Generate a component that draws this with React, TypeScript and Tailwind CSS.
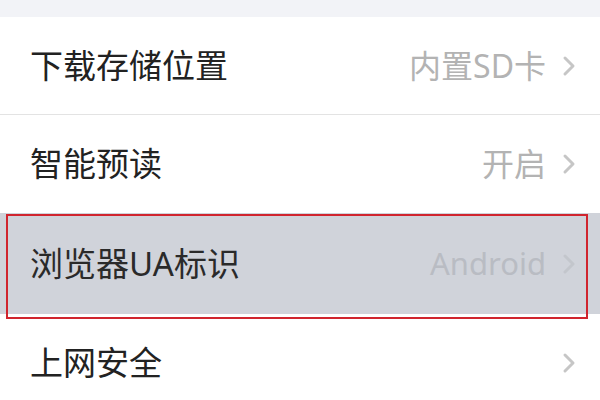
import React from 'react';

interface RowProps {
  label: string;
  value?: string;
  active?: boolean;
  divider?: boolean;
}

function Chevron({ color }: { color: string }) {
  return (
    <svg width="14" height="22" viewBox="0 0 14 22" fill="none" className="ml-[16px]">
      <polyline points="3,3 11,11 3,19" stroke={color} strokeWidth="3" strokeLinecap="round" strokeLinejoin="round" />
    </svg>
  );
}

function SettingRow({ label, value, active, divider }: RowProps) {
  if (active) {
    return (
      <div className="relative h-[101px] bg-[#d0d3da]">
        {/* selection outline */}
        <div className="absolute left-[6px] right-[12px] top-[1px] bottom-[-5px] border-2 border-[#d0252e]" />
        <div className="flex h-full items-center justify-between pl-[30px] pr-[24px]">
          <span className="text-[33px] text-[#2a2a2a]">{label}</span>
          <div className="flex items-center">
            {value && <span className="text-[31px] text-[#b9bcc3]">{value}</span>}
            <Chevron color="#c3c6cc" />
          </div>
        </div>
      </div>
    );
  }
  return (
    <div className={`flex h-[98px] items-center justify-between pl-[30px] pr-[24px] bg-white ${divider ? 'border-b border-[#e3e3e3]' : ''}`}>
      <span className="text-[33px] text-[#222222]">{label}</span>
      <div className="flex items-center">
        {value && <span className="text-[32px] text-[#b3b3b3]">{value}</span>}
        <Chevron color="#c6c6c6" />
      </div>
    </div>
  );
}

export default function App() {
  return (
    <div
      className="w-[600px] h-[400px] overflow-hidden bg-white"
      style={{ fontFamily: '"Noto Sans", "Noto Sans CJK SC", sans-serif' }}
    >
      <div className="h-[17px] bg-[#f2f3f7]" />
      <SettingRow label="下载存储位置" value="内置SD卡" divider />
      <SettingRow label="智能预读" value="开启" />
      <SettingRow label="浏览器UA标识" value="Android" active />
      <SettingRow label="上网安全" />
    </div>
  );
}
